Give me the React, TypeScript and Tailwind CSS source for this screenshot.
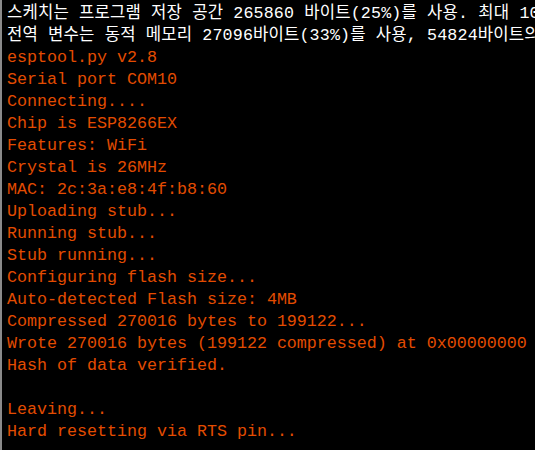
import React from 'react';

const lines: { t: string; w?: boolean }[] = [
  { t: '스케치는 프로그램 저장 공간 265860 바이트(25%)를 사용. 최대 1044464 바이트.', w: true },
  { t: '전역 변수는 동적 메모리 27096바이트(33%)를 사용, 54824바이트의 지역변수가 남음.  최대는 81920 바이트.', w: true },
  { t: 'esptool.py v2.8' },
  { t: 'Serial port COM10' },
  { t: 'Connecting....' },
  { t: 'Chip is ESP8266EX' },
  { t: 'Features: WiFi' },
  { t: 'Crystal is 26MHz' },
  { t: 'MAC: 2c:3a:e8:4f:b8:60' },
  { t: 'Uploading stub...' },
  { t: 'Running stub...' },
  { t: 'Stub running...' },
  { t: 'Configuring flash size...' },
  { t: 'Auto-detected Flash size: 4MB' },
  { t: 'Compressed 270016 bytes to 199122...' },
  { t: 'Wrote 270016 bytes (199122 compressed) at 0x00000000' },
  { t: 'Hash of data verified.' },
  { t: '' },
  { t: 'Leaving...' },
  { t: 'Hard resetting via RTS pin...' },
];

export default function App() {
  return (
    <div className="w-[535px] h-[450px] bg-black overflow-hidden flex border-l-2 border-[#8a8a8a]">
      <div
        className="flex-1 pl-[5px] pt-[3px] text-[16.67px] leading-[22px] whitespace-pre overflow-hidden"
        style={{ fontFamily: '"Liberation Mono", "Noto Sans CJK KR", monospace' }}
      >
        {lines.map((l, i) => (
          <div
            key={i}
            className={`h-[22px] ${l.w ? 'text-white tracking-[0.15px]' : 'text-[#e34c00]'}`}
          >
            {l.t || ' '}
          </div>
        ))}
      </div>
    </div>
  );
}
